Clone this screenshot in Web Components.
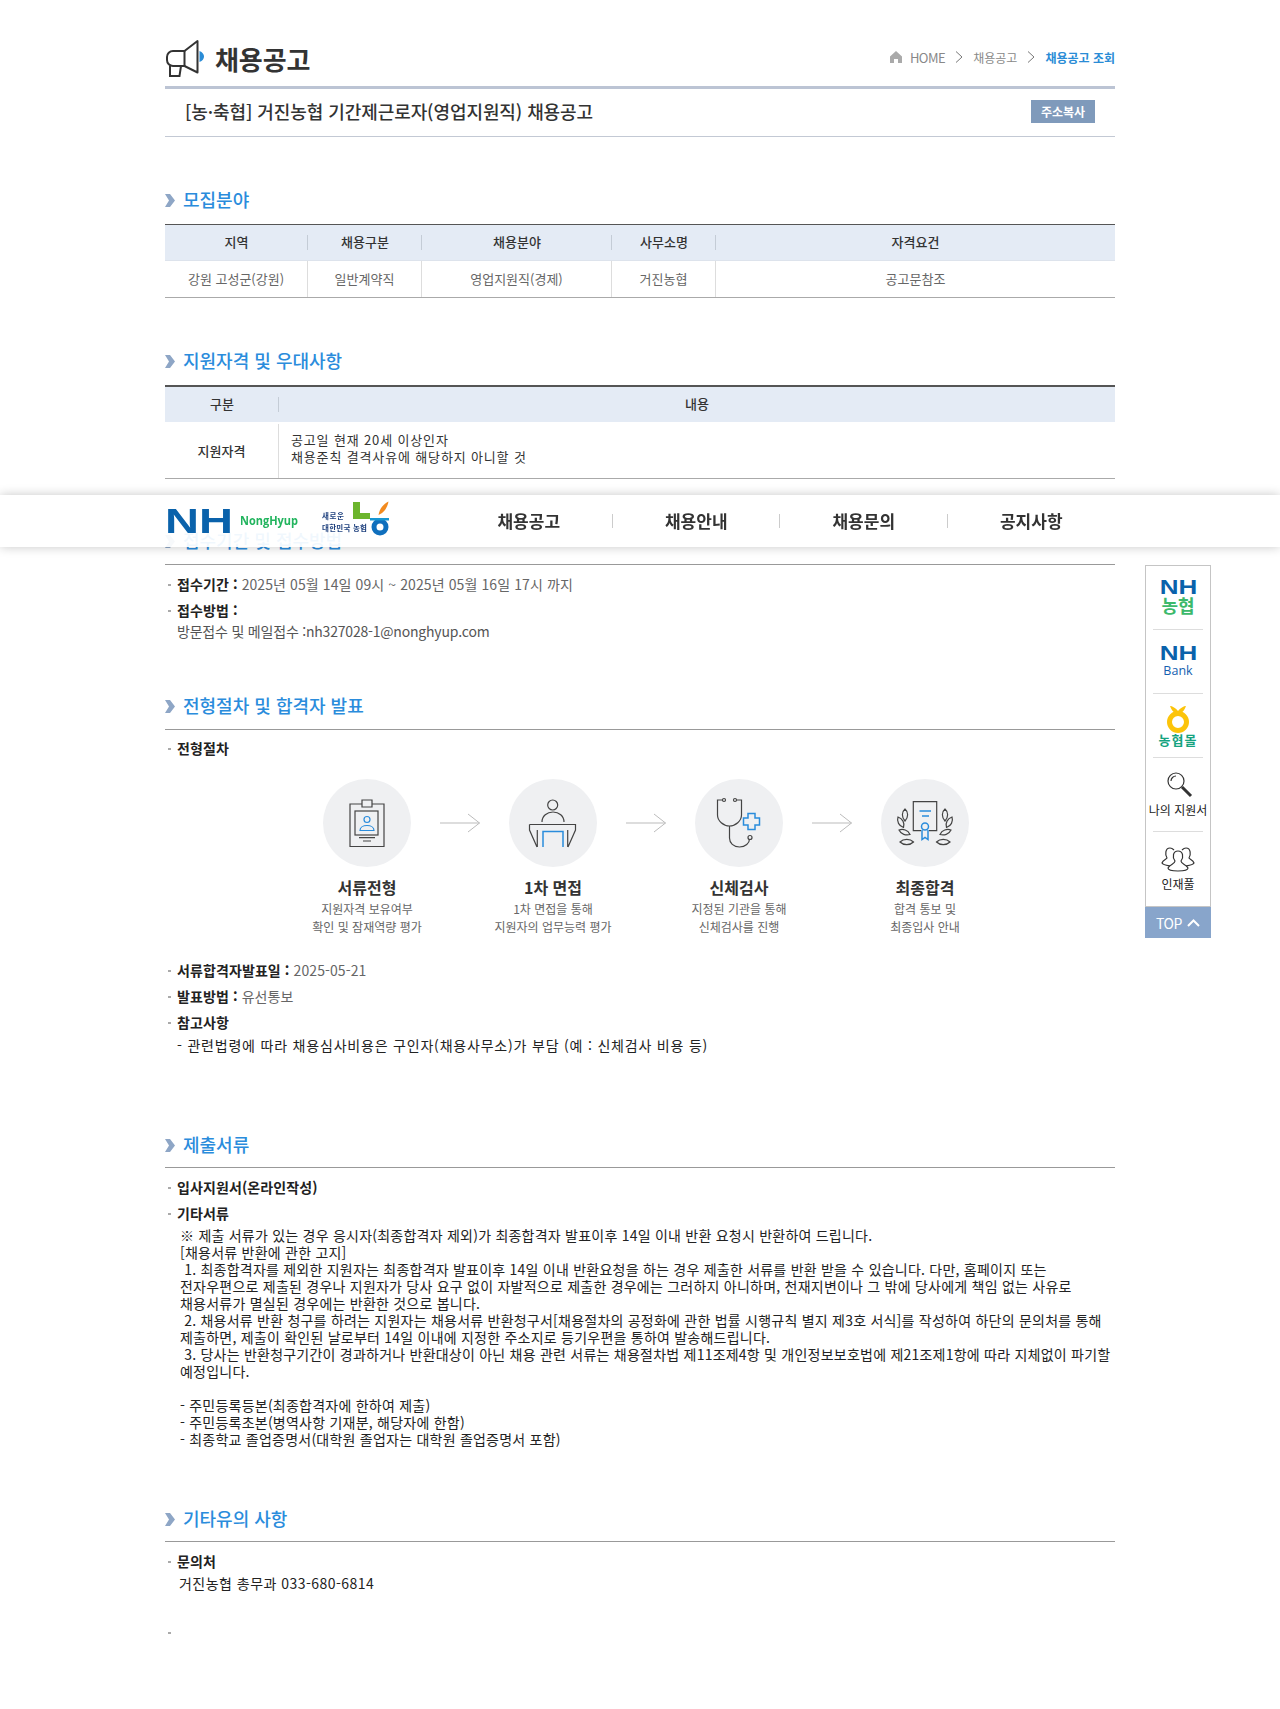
<!DOCTYPE html>
<html lang="ko"><head><meta charset="utf-8"><title>채용공고</title>
<style>
html,body{margin:0;padding:0;background:#fff}
body{font-family:"Noto Sans CJK KR","Noto Sans",sans-serif;color:#333;min-height:1709px;overflow:hidden}
</style></head><body>
<template id="t-page"><style>:host{display:block;width:950px;margin:0 auto}</style><slot></slot></template>

<template id="t-head"><style>
:host{display:flex;align-items:center;height:86px;box-sizing:border-box;padding-top:29px;border:0;justify-content:space-between}
.l{display:flex;align-items:center;gap:10px;height:40px}
h1{margin:0;font-size:26px;font-weight:600;color:#333;line-height:40px;letter-spacing:-.1px;position:relative;top:1px}
nav{display:flex;align-items:center;font-size:12px;color:#888;height:40px;margin-top:-1px}
nav b{color:#2a8cd6;font-weight:700}
nav i{font-style:normal;font-size:13px;letter-spacing:-.5px}
.c{margin:0 10px;display:block}
.h{margin-right:8px;display:block}
</style>
<div class="l"><svg width="40" height="38" viewBox="0 0 40 38" fill="none" stroke="#333" stroke-width="2"><path d="M32.500 2v31.500L19.500 27H8a6 6 0 0 1-6-6v-3a6 6 0 0 1 6-6h11.500z" stroke-linejoin="round"/><path d="M19.500 12v15M5 26.500V37h9.500L16 27"/><path d="M34.500 12c3 1 4.500 3.500 4.500 5.500s-1.500 4.500-4.500 5.500z" fill="#2a8cd6" stroke="none"/></svg><h1><slot name="title"></slot></h1></div>
<nav><svg class="h" width="12" height="12" viewBox="0 0 12 12"><path d="M6 0L12 5.500V12H8V8H4v4H0V5.500z" fill="#aaa"/></svg><i>HOME</i><svg class="c" width="8" height="12" viewBox="0 0 8 12" fill="none" stroke="#777"><path d="M1 .5L7 6 1 11.500"/></svg><span>채용공고</span><svg class="c" width="8" height="12" viewBox="0 0 8 12" fill="none" stroke="#777"><path d="M1 .5L7 6 1 11.500"/></svg><b>채용공고 조회</b></nav></template>

<template id="t-titlebar"><style>
:host{display:flex;align-items:center;justify-content:space-between;height:47px;border-top:3px solid #bcc4d4;border-bottom:1px solid #c3c9d4;padding:0 20px 0 20px;box-sizing:content-box;font-size:18px;font-weight:500;color:#333;letter-spacing:-.08px}
span{position:relative;top:-2px}
button{all:unset;width:64px;height:23px;background:#7f9abb;color:#fff;font:700 12px/23px "Noto Sans CJK KR",sans-serif;text-align:center;letter-spacing:0;position:relative;top:-1px}
</style><span><slot></slot></span><button>주소복사</button></template>

<template id="t-section"><style>
:host{display:block}
h2{margin:0;height:24px;display:flex;align-items:center;gap:8px;font-size:18px;font-weight:500;line-height:24px;color:#2a8cdc}
svg{display:block}
span{position:relative;top:-1px}
.rule{height:1px;background:#999}
</style><h2 part="h"><svg width="10" height="13" viewBox="0 0 10 13"><path d="M0 0h5l5 6.500-5 6.500H0l4-6.500z" fill="#8ea6c6"/></svg><span><slot name="title"></slot></span></h2><div class="rule" id="r"></div><slot></slot></template>

<template id="t-grid"><style>:host{display:grid;border-top:1.500px solid #555;border-bottom:1px solid #aaa}</style><slot></slot></template>
<template id="t-cell"><style>
:host{display:flex;align-items:center;justify-content:center;font-size:13px;color:#666;border-right:1px solid #ddd;box-sizing:border-box;line-height:17px;position:relative;padding-bottom:1px}
:host(:last-child){border-right:0}
:host([head]){background:#e4ebf5;color:#333;font-weight:500;border-right:0;padding-bottom:3px;border-bottom:1px solid #dde3ec}
:host([head]:not([nosep]))::after{content:"";position:absolute;right:0;top:10px;bottom:10px;width:1px;background:#c4ccd6}
:host([strong]){color:#333;font-weight:500;padding-bottom:2px}
:host([left]){justify-content:flex-start;padding:0 0 7px 12px;color:#333;letter-spacing:.85px}
</style><span><slot></slot></span></template>

<template id="t-item"><style>
:host{display:block;position:relative;padding-left:12px;font-size:14px;line-height:26px;color:#666;letter-spacing:.1px}
:host::before{content:"";position:absolute;left:3px;top:13px;width:3px;height:1.500px;background:#aaa}
::slotted(b){color:#222;font-weight:600}
</style><slot></slot></template>

<template id="t-detail"><style>
:host{display:block;color:#222;font-size:14px;line-height:22px;letter-spacing:0}
</style><slot></slot></template>

<template id="t-steps"><style>:host{display:flex;padding-left:129px;margin:18px 0 21px}</style><slot></slot></template>
<template id="t-step"><style>
:host{display:block;width:146px;text-align:center;flex:none}
.c{width:88px;height:88px;border-radius:50%;background:#eff0f2;margin:0 auto 9px}
.t{font-size:16px;line-height:22px;font-weight:600;color:#333;margin-bottom:2px}
.s{font-size:12px;line-height:18px;color:#666}
</style><div class="c"><slot name="icon"></slot></div><div class="t"><slot name="t"></slot></div><div class="s"><slot name="s"></slot></div></template>
<template id="t-arrow"><style>:host{display:block;width:40px;height:88px;flex:none}svg{display:block}</style>
<svg width="40" height="88" viewBox="0 0 40 88" fill="none" stroke="#bbb"><path d="M0 44h39.500M28 35l11.500 9L28 53"/></svg></template>

<template id="t-nav"><style>
:host{display:block;position:fixed;left:0;right:0;top:495px;height:52px;background:rgba(255,255,255,.93);box-shadow:0 0 10px rgba(0,0,0,.22);z-index:5}
.in{width:950px;margin:0 auto;display:flex;align-items:center;height:52px}
.logo{width:280px;flex:none;display:block}
.items{display:flex;flex:1;align-items:center}
::slotted(rc-navlink){flex:1}
</style><div class="in"><svg class="logo" width="280" height="52" viewBox="0 0 280 52">
<text x="0" y="38" font-family="Liberation Sans" font-weight="700" font-size="35" fill="#0a62ab" textLength="68" lengthAdjust="spacingAndGlyphs">NH</text>
<text x="75" y="30" font-family="Open Sans" font-weight="700" font-size="12" fill="#22b45e" textLength="58" lengthAdjust="spacingAndGlyphs">NongHyup</text>
<text x="157" y="24" font-family="Noto Sans CJK KR" font-weight="700" font-size="7.500" fill="#20427f" textLength="22">새로운</text>
<text x="157" y="36" font-family="Noto Sans CJK KR" font-weight="700" font-size="7.500" fill="#20427f" textLength="45">대한민국 농협</text>
<path d="M188 7h7v11h10v6h-17z" fill="#6cb52d"/>
<path d="M223.500 6.500c-5 2.500-9 7-10 13.500 5-2 9-7 10-13.500z" fill="#f28a1e"/>
<circle cx="215" cy="32" r="6" fill="none" stroke="#0f6fbd" stroke-width="5"/><path d="M205 23h19v2.500h-19z" fill="#1796d2"/>
</svg><div class="items"><slot></slot></div></div></template>
<template id="t-navlink"><style>
:host{display:block;text-align:center;font-size:17px;font-weight:600;color:#333;position:relative;line-height:28px}
:host(:not(:last-child))::after{content:"";position:absolute;right:0;top:7px;height:14px;width:1px;background:#ccc}
</style><slot></slot></template>

<template id="t-side"><style>
:host{display:block;position:fixed;left:1145px;top:565px;width:66px;z-index:6}
.box{border:1px solid #c5c5c5;border-bottom:0;box-sizing:border-box;padding:0 7px;background:#fff}
.top{height:32px;background:#88a5cb;color:#fff;font-size:14px;letter-spacing:-.5px;display:flex;align-items:center;justify-content:center;gap:5px;border-top:1px solid #c5c5c5;box-sizing:border-box}
</style><div class="box"><slot></slot></div><div class="top">TOP<svg width="13" height="8" viewBox="0 0 13 8" fill="none" stroke="#fff" stroke-width="2"><path d="M1 7l5.500-5.500L12 7"/></svg></div></template>
<template id="t-sideitem"><style>
:host{display:flex;flex-direction:column;align-items:center;box-sizing:border-box;border-bottom:1px solid #ddd;font-size:12px;color:#222;line-height:16px;white-space:nowrap}
:host(:last-child){border-bottom:0}
svg{display:block}
::slotted(.nh){display:block;font:700 20px/15px "Liberation Sans",sans-serif;color:#0a62ab;transform:scaleX(1.3)}
::slotted(.nong){display:block;font:700 18px/18px "Noto Sans CJK KR",sans-serif;color:#3db96b;margin-top:1px}
::slotted(.bank){display:block;font:400 12.500px/16px "Open Sans",sans-serif;color:#1560b0;margin-top:2px}
</style><slot></slot></template>

<rc-page>
<rc-head><span slot="title">채용공고</span></rc-head>
<rc-titlebar>[농·축협] 거진농협 기간제근로자(영업지원직) 채용공고</rc-titlebar>

<rc-section gap="12" style="margin-top:51px" norule><span slot="title">모집분야</span>
<rc-grid cols="143px 114px 190px 104px 399px" rows="36px 36px">
<rc-cell head>지역</rc-cell><rc-cell head>채용구분</rc-cell><rc-cell head>채용분야</rc-cell><rc-cell head>사무소명</rc-cell><rc-cell head nosep>자격요건</rc-cell>
<rc-cell>강원 고성군(강원)</rc-cell><rc-cell>일반계약직</rc-cell><rc-cell>영업지원직(경제)</rc-cell><rc-cell>거진농협</rc-cell><rc-cell>공고문참조</rc-cell>
</rc-grid></rc-section>

<rc-section gap="12" style="margin-top:51px" norule><span slot="title">지원자격 및 우대사항</span>
<rc-grid cols="114px 836px" rows="37px 54px" style="border-top-width:2px">
<rc-cell head style="border-bottom:2px solid #fff">구분</rc-cell><rc-cell head nosep style="border-bottom:2px solid #fff">내용</rc-cell>
<rc-cell strong>지원자격</rc-cell><rc-cell left>공고일 현재 20세 이상인자<br>채용준칙 결격사유에 해당하지 아니할 것</rc-cell>
</rc-grid></rc-section>

<rc-section gap="11" style="margin-top:50px"><span slot="title">접수기간 및 접수방법</span>
<rc-item style="margin-top:6px"><b>접수기간 :</b> 2025년 05월 14일 09시 ~ 2025년 05월 16일 17시 까지</rc-item>
<rc-item><b>접수방법 :</b></rc-item>
<rc-detail style="margin:-3px 0 0 12px;color:#555;letter-spacing:-.2px">방문접수 및 메일접수 :nh327028-1@nonghyup.com</rc-detail>
</rc-section>

<rc-section gap="11" style="margin-top:52px"><span slot="title">전형절차 및 합격자 발표</span>
<rc-item style="margin-top:5px"><b>전형절차</b></rc-item>
<rc-steps>
<rc-step><svg slot="icon" width="88" height="88" viewBox="0 0 88 88" fill="none" stroke="#444" stroke-width="1.200"><path d="M39 25H27v42.500h34V25H49M39 21h10v7H39z"/><rect x="32" y="32" width="23" height="24"/><path d="M36 58.700h16M40 62h8"/><circle cx="44" cy="40.500" r="3" stroke="#2a8cdc"/><path d="M37 51.500c0-3 3-5 7-5s7 2 7 5H37z" stroke="#2a8cdc"/></svg><span slot="t">서류전형</span><span slot="s">지원자격 보유여부<br>확인 및 잠재역량 평가</span></rc-step>
<rc-arrow></rc-arrow>
<rc-step><svg slot="icon" width="88" height="88" viewBox="0 0 88 88" fill="none" stroke="#444" stroke-width="1.200"><circle cx="43.700" cy="26" r="5"/><path d="M33 43c0-6 5-10 11-10s11 4 11 10"/><path d="M20.500 45.500h46V51L59 68M20.500 45.500V51L28 68M28.300 51v17M58.700 51v17"/><path d="M34 68V52.500h20V68" stroke="#2a8cdc" stroke-width="1.500"/></svg><span slot="t">1차 면접</span><span slot="s">1차 면접을 통해<br>지원자의 업무능력 평가</span></rc-step>
<rc-arrow></rc-arrow>
<rc-step><svg slot="icon" width="88" height="88" viewBox="0 0 88 88" fill="none" stroke="#444" stroke-width="1.200"><circle cx="29" cy="21" r="1.500"/><circle cx="40" cy="21" r="1.500"/><path d="M27.500 21h-5v15c0 6 6 11 12 11s12-5 12-11V21h-5"/><path d="M34.500 47v12c0 5 4 9 10 9s10-4 10-8"/><circle cx="55" cy="58.500" r="2"/><path d="M53 34.500h7v4.500h4.500v7H60v4.500h-7V46h-4.500v-7H53z" stroke="#2a8cdc" stroke-width="1.500" fill="#eff0f2"/></svg><span slot="t">신체검사</span><span slot="s">지정된 기관을 통해<br>신체검사를 진행</span></rc-step>
<rc-arrow></rc-arrow>
<rc-step><svg slot="icon" width="88" height="88" viewBox="0 0 88 88" fill="none" stroke="#444" stroke-width="1.200"><path d="M40 51.700h-7.700v-29h23.400v29H48"/><path d="M38.500 32H50M41 37h7" stroke="#2a8cdc" stroke-width="1.500"/><circle cx="44" cy="47.500" r="3.500" stroke="#2a8cdc" stroke-width="1.500"/><path d="M41 51v9.500l3-2 3 2V51" stroke="#2a8cdc" stroke-width="1.500"/><path d="M24 30c-3.500 3-3.500 8 0 12 3.500-4 3.500-9 0-12zM17 38c-1.500 4.500 1 9 5.500 10.500 1.500-4.500-1-9-5.500-10.500zM18 51c2 4.500 7 5.500 11 4.500-2-4.500-7-6-11-4.500zM19 63c3.500 3.500 10 3.500 13.500 0-3.500-3.500-10-3.500-13.500 0z"/><path d="M64 30c3.500 3 3.500 8 0 12-3.500-4-3.500-9 0-12zM71 38c1.500 4.500-1 9-5.500 10.500-1.500-4.500 1-9 5.500-10.500zM70 51c-2 4.500-7 5.500-11 4.500 2-4.500 7-6 11-4.500zM69 63c-3.500 3.500-10 3.500-13.500 0 3.500-3.500 10-3.500 13.500 0z"/></svg><span slot="t">최종합격</span><span slot="s">합격 통보 및<br>최종입사 안내</span></rc-step>
</rc-steps>
<rc-item><b>서류합격자발표일 :</b> 2025-05-21</rc-item>
<rc-item><b>발표방법 :</b> 유선통보</rc-item>
<rc-item><b>참고사항</b></rc-item>
<rc-detail style="margin:-1px 0 0 12px;letter-spacing:.8px">- 관련법령에 따라 채용심사비용은 구인자(채용사무소)가 부담 (예 : 신체검사 비용 등)</rc-detail>
</rc-section>

<rc-section gap="10" style="margin-top:77px"><span slot="title">제출서류</span>
<rc-item style="margin-top:6px"><b>입사지원서(온라인작성)</b></rc-item>
<rc-item><b>기타서류</b></rc-item>
<rc-detail style="margin:1px 0 0 15px;line-height:17px;letter-spacing:.23px;white-space:nowrap">※ 제출 서류가 있는 경우 응시자(최종합격자 제외)가 최종합격자 발표이후 14일 이내 반환 요청시 반환하여 드립니다.<br>[채용서류 반환에 관한 고지]<br>&nbsp;1. 최종합격자를 제외한 지원자는 최종합격자 발표이후 14일 이내 반환요청을 하는 경우 제출한 서류를 반환 받을 수 있습니다. 다만, 홈페이지 또는<br>전자우편으로 제출된 경우나 지원자가 당사 요구 없이 자발적으로 제출한 경우에는 그러하지 아니하며, 천재지변이나 그 밖에 당사에게 책임 없는 사유로<br>채용서류가 멸실된 경우에는 반환한 것으로 봅니다.<br>&nbsp;2. 채용서류 반환 청구를 하려는 지원자는 채용서류 반환청구서[채용절차의 공정화에 관한 법률 시행규칙 별지 제3호 서식]를 작성하여 하단의 문의처를 통해<br>제출하면, 제출이 확인된 날로부터 14일 이내에 지정한 주소지로 등기우편을 통하여 발송해드립니다.<br>&nbsp;3. 당사는 반환청구기간이 경과하거나 반환대상이 아닌 채용 관련 서류는 채용절차법 제11조제4항 및 개인정보보호법에 제21조제1항에 따라 지체없이 파기할<br>예정입니다.<br><br>- 주민등록등본(최종합격자에 한하여 제출)<br>- 주민등록초본(병역사항 기재분, 해당자에 한함)<br>- 최종학교 졸업증명서(대학원 졸업자는 대학원 졸업증명서 포함)</rc-detail>
</rc-section>

<rc-section gap="10" style="margin-top:59px"><span slot="title">기타유의 사항</span>
<rc-item style="margin-top:6px"><b>문의처</b></rc-item>
<rc-detail style="margin:-2px 0 0 14px;letter-spacing:.47px">거진농협 총무과 033-680-6814</rc-detail>
<rc-item style="margin-top:25px">&nbsp;</rc-item>
</rc-section>
</rc-page>

<rc-nav><rc-navlink>채용공고</rc-navlink><rc-navlink>채용안내</rc-navlink><rc-navlink>채용문의</rc-navlink><rc-navlink>공지사항</rc-navlink></rc-nav>

<rc-side>
<rc-sideitem style="height:64px;padding-top:14px"><span class="nh">NH</span><span class="nong">농협</span></rc-sideitem>
<rc-sideitem style="height:64px;padding-top:16px"><span class="nh">NH</span><span class="bank">Bank</span></rc-sideitem>
<rc-sideitem style="height:64px;padding-top:10px"><svg width="50" height="44" viewBox="0 0 50 44"><path d="M17 2c2 0 6 2 8 5 2-3 6-5 8-5-1 3-3 6-6 8h-4c-3-2-5-5-6-8z" fill="#fcc40a"/><circle cx="25" cy="18" r="8.500" fill="none" stroke="#fcc40a" stroke-width="5"/><text x="25" y="41" text-anchor="middle" font-family="Noto Sans CJK KR" font-weight="700" font-size="13" letter-spacing="1" fill="#16a37f">농협몰</text></svg></rc-sideitem>
<rc-sideitem style="height:74px;padding-top:12px"><svg width="50" height="28" viewBox="0 0 50 28" fill="none" stroke="#333" stroke-width="1.200" style="margin-bottom:4px"><circle cx="23" cy="11" r="8"/><path d="M18 11a5 5 0 0 1 5-5"/><path d="M29 17l9 9" stroke-width="3"/></svg><span>나의 지원서</span></rc-sideitem>
<rc-sideitem style="height:74px;padding-top:11px"><svg width="50" height="31" viewBox="0 0 50 31" fill="none" stroke="#333" stroke-width="1.200" style="margin-bottom:2px"><path d="M17 23c-3-.5-7-1-8-3 1-3 4-3.500 5-5-2-3-2-10 3-10 2 0 3 1 4 2"/><path d="M33 23c3-.5 7-1 8-3-1-3-4-3.500-5-5 2-3 2-10-3-10-2 0-3 1-4 2"/><path d="M25 8c-5 0-6 6-3 10 0 3-5 3-7 7 0 2 3 3 10 3s10-1 10-3c-2-4-7-4-7-7 3-4 2-10-3-10z"/></svg><span>인재풀</span></rc-sideitem>
</rc-side>

<script>
function reg(tag,tpl,init){customElements.define(tag,class extends HTMLElement{constructor(){super();this.attachShadow({mode:"open"}).appendChild(document.getElementById(tpl).content.cloneNode(true));}connectedCallback(){if(init)init(this);}});}
reg("rc-page","t-page");reg("rc-head","t-head");reg("rc-titlebar","t-titlebar");
reg("rc-section","t-section",function(e){var g=e.getAttribute("gap")||"10";var r=e.shadowRoot.getElementById("r");r.style.marginTop=g+"px";if(e.hasAttribute("norule"))r.style.height="0";});
reg("rc-grid","t-grid",function(e){e.style.gridTemplateColumns=e.getAttribute("cols");e.style.gridTemplateRows=e.getAttribute("rows");});
reg("rc-cell","t-cell");reg("rc-item","t-item");reg("rc-detail","t-detail");reg("rc-steps","t-steps");reg("rc-step","t-step");reg("rc-arrow","t-arrow");reg("rc-nav","t-nav");reg("rc-navlink","t-navlink");reg("rc-side","t-side");reg("rc-sideitem","t-sideitem");
</script>
</body></html>
